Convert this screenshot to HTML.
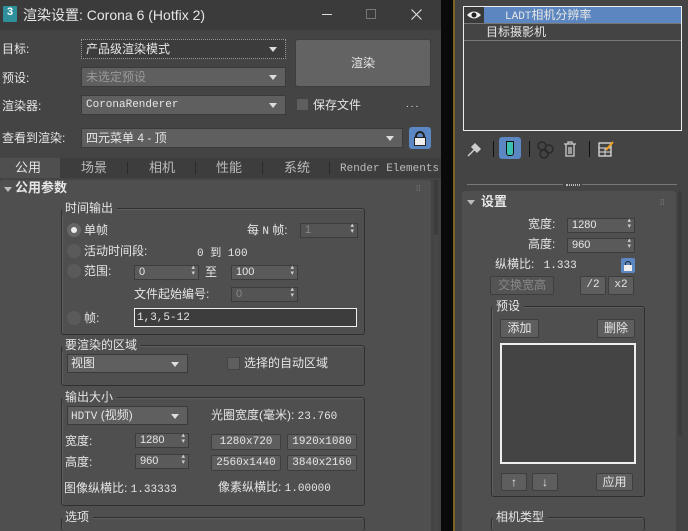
<!DOCTYPE html>
<html><head><meta charset="utf-8"><style>
*{margin:0;padding:0;box-sizing:border-box}
html,body{width:688px;height:531px;overflow:hidden}
body{background:#0a0a0a;font-family:"Liberation Sans","Noto Sans CJK SC",sans-serif;font-size:12px;color:#e6e6e6;position:relative}
.a{position:absolute}
.t{position:absolute;white-space:nowrap;line-height:14px}
.dd{position:absolute;background:#5f5f5f;border:1px solid #3a3a3a}
.dd:after{content:"";position:absolute;right:8px;top:50%;margin-top:-2px;border-left:4px solid transparent;border-right:4px solid transparent;border-top:5px solid #ddd}
.sp{position:absolute;background:#5a5a5a;border:1px solid #3c3c3c;font-size:11px;padding-left:4px;line-height:13px}
.sp:after{content:"▴\A▾";white-space:pre;position:absolute;right:3px;top:-1px;font-size:7px;line-height:6px;color:#ccc}
.btn{position:absolute;background:#5e5e5e;border:1px solid #3e3e3e;border-radius:2px;text-align:center;font-size:12px}
.grp{position:absolute;border:1px solid #2f2f2f;border-radius:3px;box-shadow:inset 1px 1px 0 #5e5e5e}
.gl{position:absolute;background:#4f4f4f;padding:0 4px 0 3px;line-height:14px;white-space:nowrap}
.rad{position:absolute;width:14px;height:14px;border-radius:50%;background:#5a5a5a}
.cb{position:absolute;width:13px;height:13px;background:#5e5e5e;border:1px solid #444}
.m{font-family:"Liberation Mono","Noto Sans CJK SC",monospace;font-size:11px}
</style></head><body>
<!-- LEFT WINDOW -->
<div class="a" style="left:0;top:0;width:441px;height:531px;background:#444"></div>
<div class="a" style="left:0;top:0;width:441px;height:30px;background:#3b3b3b"></div>
<div class="a" style="left:3px;top:6px;width:14px;height:16px;background:#2f8f9a;border-radius:1px;color:#fff;font-size:11px;font-weight:bold;text-align:center;line-height:13px">3</div>
<div class="t" style="left:23px;top:7px;font-size:14px;line-height:16px">渲染设置: Corona 6 (Hotfix 2)</div>
<div class="a" style="left:322px;top:14px;width:10px;height:1px;background:#ddd"></div>
<div class="a" style="left:366px;top:9px;width:10px;height:10px;border:1px solid #777"></div>
<svg class="a" style="left:411px;top:9px" width="11" height="11"><path d="M0.5 0.5 L10.5 10.5 M10.5 0.5 L0.5 10.5" stroke="#ddd" stroke-width="1.2"/></svg>

<div class="t" style="left:2px;top:42px">目标:</div>
<div class="dd" style="left:81px;top:39px;width:205px;height:20px;background:#3c3c3c;border:1px dotted #999"></div>
<div class="t" style="left:86px;top:42px">产品级渲染模式</div>
<div class="btn" style="left:295px;top:39px;width:136px;height:48px;background:#636363;line-height:46px;border-radius:3px">渲染</div>
<div class="t" style="left:2px;top:71px">预设:</div>
<div class="dd" style="left:81px;top:67px;width:205px;height:20px"></div>
<div class="t" style="left:86px;top:70px;color:#999">未选定预设</div>
<div class="t" style="left:2px;top:99px">渲染器:</div>
<div class="dd" style="left:81px;top:95px;width:205px;height:20px"></div>
<div class="t m" style="left:86px;top:98px">CoronaRenderer</div>
<div class="cb" style="left:296px;top:98px"></div>
<div class="t" style="left:313px;top:98px">保存文件</div>
<div class="t" style="left:406px;top:98px;letter-spacing:2px;font-size:10px">...</div>
<div class="t" style="left:2px;top:131px">查看到渲染:</div>
<div class="dd" style="left:81px;top:128px;width:322px;height:20px"></div>
<div class="t" style="left:86px;top:131px">四元菜单 4 - 顶</div>
<div class="a" style="left:409px;top:127px;width:22px;height:22px;background:#5b87c2;border-radius:3px"></div>
<div class="a" style="left:415px;top:131px;width:10px;height:9px;border:2px solid #222;border-bottom:none;border-radius:5px 5px 0 0"></div>
<div class="a" style="left:414px;top:137px;width:12px;height:9px;background:#eee;border:1px solid #222"></div>

<div class="a" style="left:0;top:158px;width:441px;height:20px;background:#3d3d3d"></div>
<div class="a" style="left:0;top:158px;width:60px;height:20px;background:#4f4f4f"></div>
<div class="t" style="left:15px;top:161px;font-size:13px">公用</div>
<div class="t" style="left:81px;top:161px;font-size:13px;color:#bbb">场景</div>
<div class="t" style="left:149px;top:161px;font-size:13px;color:#bbb">相机</div>
<div class="t" style="left:216px;top:161px;font-size:13px;color:#bbb">性能</div>
<div class="t" style="left:284px;top:161px;font-size:13px;color:#bbb">系统</div>
<div class="t m" style="left:340px;top:162px;color:#bbb">Render Elements</div>
<div class="a" style="left:127px;top:162px;width:1px;height:12px;background:#2a2a2a"></div>
<div class="a" style="left:195px;top:162px;width:1px;height:12px;background:#2a2a2a"></div>
<div class="a" style="left:262px;top:162px;width:1px;height:12px;background:#2a2a2a"></div>
<div class="a" style="left:329px;top:162px;width:1px;height:12px;background:#2a2a2a"></div>

<div class="a" style="left:0;top:180px;width:431px;height:351px;background:#4f4f4f;border-radius:3px 3px 0 0"></div>
<div class="a" style="left:434px;top:180px;width:4px;height:55px;background:#3c3c3c;border-radius:2px"></div>
<div class="a" style="left:434px;top:235px;width:4px;height:296px;background:#474747"></div>
<div class="a" style="left:4px;top:187px;border-left:4px solid transparent;border-right:4px solid transparent;border-top:5px solid #bbb"></div>
<div class="t" style="left:15px;top:181px;font-weight:bold;font-size:13px">公用参数</div>
<div class="t" style="left:416px;top:182px;color:#888;font-size:8px">⁞⁞</div>

<!-- 时间输出 -->
<div class="grp" style="left:61px;top:208px;width:304px;height:127px"></div>
<div class="gl" style="left:62px;top:201px">时间输出</div>
<div class="rad" style="left:67px;top:223px;background:#666"></div>
<div class="a" style="left:71px;top:227px;width:6px;height:6px;border-radius:50%;background:#eee"></div>
<div class="t" style="left:84px;top:223px">单帧</div>
<div class="t" style="left:247px;top:223px">每 <span class="m">N</span> 帧:</div>
<div class="sp" style="left:300px;top:223px;width:58px;height:15px;color:#888;background:#545454">1</div>
<div class="rad" style="left:67px;top:244px"></div>
<div class="t" style="left:84px;top:244px">活动时间段:</div>
<div class="t m" style="left:197px;top:245px">0 <span style="font-family:'Noto Sans CJK SC'">到</span> 100</div>
<div class="rad" style="left:67px;top:264px"></div>
<div class="t" style="left:84px;top:264px">范围:</div>
<div class="sp" style="left:134px;top:265px;width:65px;height:15px">0</div>
<div class="t" style="left:205px;top:265px">至</div>
<div class="sp" style="left:231px;top:265px;width:67px;height:15px">100</div>
<div class="t" style="left:134px;top:287px">文件起始编号:</div>
<div class="sp" style="left:231px;top:287px;width:67px;height:15px;color:#888;background:#545454">0</div>
<div class="rad" style="left:67px;top:311px"></div>
<div class="t" style="left:84px;top:311px">帧:</div>
<div class="a" style="left:134px;top:308px;width:223px;height:19px;background:#3d3d3d;border:1px solid #eee"></div>
<div class="t m" style="left:137px;top:311px">1,3,5-12</div>

<!-- 要渲染的区域 -->
<div class="grp" style="left:61px;top:345px;width:304px;height:41px"></div>
<div class="gl" style="left:62px;top:338px">要渲染的区域</div>
<div class="dd" style="left:67px;top:354px;width:121px;height:19px"></div>
<div class="t" style="left:71px;top:356px">视图</div>
<div class="cb" style="left:227px;top:357px"></div>
<div class="t" style="left:244px;top:356px">选择的自动区域</div>

<!-- 输出大小 -->
<div class="grp" style="left:61px;top:397px;width:304px;height:109px"></div>
<div class="gl" style="left:62px;top:390px">输出大小</div>
<div class="dd" style="left:67px;top:406px;width:121px;height:19px"></div>
<div class="t" style="left:71px;top:408px"><span class="m">HDTV</span> (视频)</div>
<div class="t" style="left:211px;top:408px">光圈宽度(毫米): <span class="m">23.760</span></div>
<div class="t" style="left:65px;top:434px">宽度:</div>
<div class="sp" style="left:135px;top:433px;width:54px;height:15px">1280</div>
<div class="t" style="left:65px;top:455px">高度:</div>
<div class="sp" style="left:135px;top:454px;width:54px;height:15px">960</div>
<div class="btn m" style="left:211px;top:434px;width:70px;height:16px;line-height:14px">1280x720</div>
<div class="btn m" style="left:287px;top:434px;width:70px;height:16px;line-height:14px">1920x1080</div>
<div class="btn m" style="left:211px;top:455px;width:70px;height:16px;line-height:14px">2560x1440</div>
<div class="btn m" style="left:287px;top:455px;width:70px;height:16px;line-height:14px">3840x2160</div>
<div class="t" style="left:64px;top:481px">图像纵横比: <span class="m">1.33333</span></div>
<div class="t" style="left:218px;top:480px">像素纵横比: <span class="m">1.00000</span></div>

<div class="grp" style="left:61px;top:517px;width:304px;height:14px;border-bottom:none"></div>
<div class="gl" style="left:62px;top:510px">选项</div>

<!-- divider -->
<div class="a" style="left:453px;top:0;width:2px;height:531px;background:#7a6420"></div>

<!-- RIGHT PANEL -->
<div class="a" style="left:455px;top:0;width:233px;height:531px;background:#444"></div>
<div class="a" style="left:463px;top:6px;width:219px;height:125px;background:#444;border:1px solid #eee"></div>
<div class="a" style="left:464px;top:7px;width:20px;height:16px;background:#3a3a3a"></div>
<svg class="a" style="left:466px;top:9px" width="16" height="12"><path d="M1 6 Q8 -1 15 6 Q8 13 1 6 Z" fill="#eee"/><circle cx="8" cy="6" r="2.5" fill="#222"/></svg>
<div class="a" style="left:484px;top:7px;width:197px;height:16px;background:#5b86c0"></div>
<div class="t" style="left:505px;top:8px"><span class="m">LADT</span>相机分辨率</div>
<div class="a" style="left:464px;top:23px;width:217px;height:1px;background:#777"></div>
<div class="t" style="left:486px;top:25px">目标摄影机</div>
<div class="a" style="left:464px;top:40px;width:217px;height:1px;background:#777"></div>

<svg class="a" style="left:465px;top:140px" width="20" height="20"><path d="M3 16 L9 10 M8 6 L13 11 M10 4 L15 9 L12 12 L7 7 Z" stroke="#ccc" stroke-width="1.5" fill="#ccc"/></svg>
<div class="a" style="left:493px;top:141px;width:1px;height:16px;background:#111"></div>
<div class="a" style="left:499px;top:137px;width:22px;height:22px;background:#5b87c2;border-radius:3px"></div>
<div class="a" style="left:506px;top:141px;width:8px;height:15px;border:1px solid #111;border-radius:0 0 3px 3px;background:#3cc0b0"></div>
<div class="a" style="left:529px;top:141px;width:1px;height:16px;background:#111"></div>
<svg class="a" style="left:537px;top:141px" width="20" height="18"><circle cx="5" cy="5" r="4" fill="none" stroke="#2a2a2a" stroke-width="1.5"/><circle cx="12" cy="8" r="4" fill="none" stroke="#2a2a2a" stroke-width="1.5"/><circle cx="7" cy="13" r="4" fill="none" stroke="#2a2a2a" stroke-width="1.5"/></svg>
<svg class="a" style="left:563px;top:141px" width="14" height="17"><path d="M1 3 H13 M5 3 V1 H9 V3 M3 3 V15 H11 V3 M6 6 V13 M8 6 V13" stroke="#ccc" fill="none" stroke-width="1.3"/></svg>
<div class="a" style="left:589px;top:141px;width:1px;height:16px;background:#111"></div>
<svg class="a" style="left:598px;top:141px" width="17" height="17"><rect x="1" y="2" width="12" height="13" fill="none" stroke="#ddd" stroke-width="1.3"/><path d="M1 7 H13 M1 11 H13 M7 7 V15" stroke="#ddd"/><path d="M8 9 L15 1" stroke="#f0a020" stroke-width="2"/></svg>

<div class="a" style="left:467px;top:184px;width:96px;height:1px;background:#777"></div>
<div class="a" style="left:582px;top:184px;width:95px;height:1px;background:#777"></div>
<div class="a" style="left:566px;top:184px;width:14px;height:2px;border-top:1px dotted #bbb;border-bottom:1px dotted #bbb"></div>

<div class="a" style="left:462px;top:191px;width:214px;height:340px;background:#4f4f4f;border-radius:3px 3px 0 0"></div>
<div class="a" style="left:678px;top:191px;width:4px;height:245px;background:#3c3c3c;border-radius:2px"></div>
<div class="a" style="left:467px;top:200px;border-left:4px solid transparent;border-right:4px solid transparent;border-top:5px solid #bbb"></div>
<div class="t" style="left:481px;top:195px;font-weight:bold;font-size:13px">设置</div>
<div class="t" style="left:660px;top:196px;color:#888;font-size:8px">⁞⁞</div>
<div class="t" style="left:528px;top:217px">宽度:</div>
<div class="sp" style="left:567px;top:218px;width:68px;height:15px">1280</div>
<div class="t" style="left:528px;top:237px">高度:</div>
<div class="sp" style="left:567px;top:238px;width:68px;height:15px">960</div>
<div class="t" style="left:495px;top:257px">纵横比: <span class="m" style="margin-left:6px">1.333</span></div>
<div class="a" style="left:621px;top:258px;width:14px;height:15px;background:#5b87c2;border-radius:2px"></div>
<div class="a" style="left:625px;top:261px;width:6px;height:5px;border:1px solid #222;border-bottom:none;border-radius:3px 3px 0 0"></div>
<div class="a" style="left:624px;top:265px;width:8px;height:6px;background:#eee"></div>
<div class="btn" style="left:490px;top:276px;width:64px;height:19px;line-height:17px;color:#888;background:#545454">交换宽高</div>
<div class="btn m" style="left:580px;top:276px;width:26px;height:19px;line-height:17px">/2</div>
<div class="btn m" style="left:608px;top:276px;width:26px;height:19px;line-height:17px">x2</div>

<div class="grp" style="left:491px;top:306px;width:154px;height:191px"></div>
<div class="gl" style="left:493px;top:299px">预设</div>
<div class="btn" style="left:500px;top:319px;width:39px;height:19px;line-height:17px">添加</div>
<div class="btn" style="left:597px;top:319px;width:38px;height:19px;line-height:17px">删除</div>
<div class="a" style="left:500px;top:343px;width:136px;height:121px;background:#444;border:2px solid #eee"></div>
<div class="btn" style="left:501px;top:473px;width:26px;height:18px;line-height:16px">↑</div>
<div class="btn" style="left:532px;top:473px;width:26px;height:18px;line-height:16px">↓</div>
<div class="btn" style="left:596px;top:473px;width:37px;height:18px;line-height:16px">应用</div>
<div class="grp" style="left:491px;top:517px;width:154px;height:14px;border-bottom:none"></div>
<div class="gl" style="left:493px;top:510px">相机类型</div>
</body></html>
